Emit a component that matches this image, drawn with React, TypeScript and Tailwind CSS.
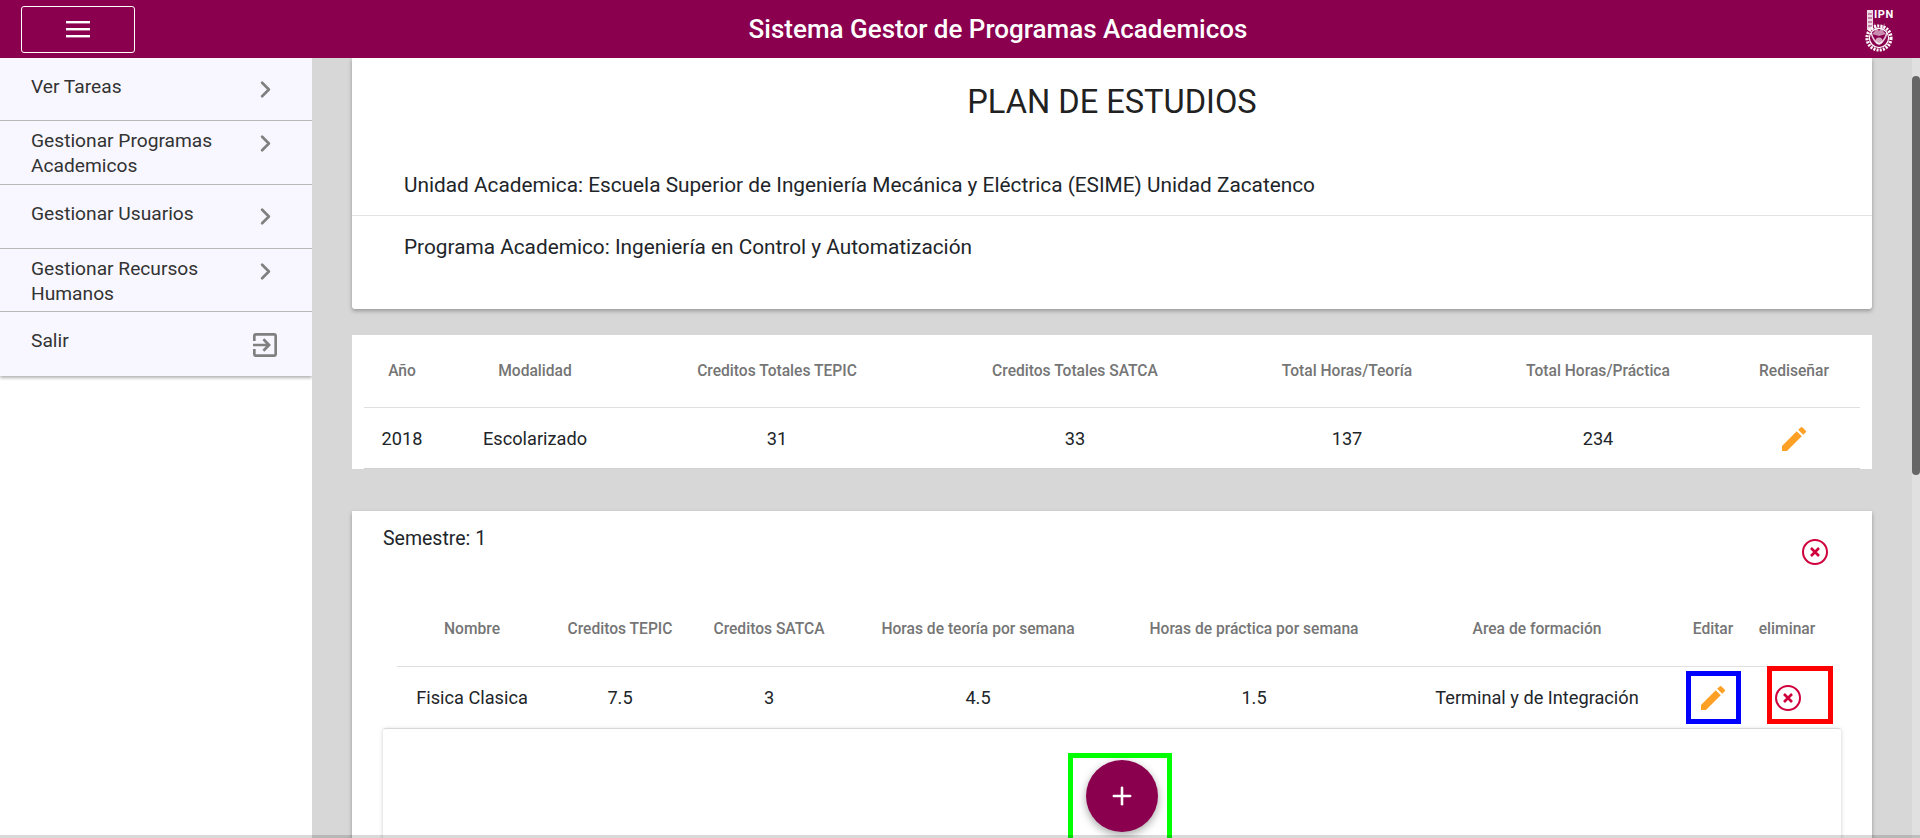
import React from 'react';
import { ChevronRight, Plus } from 'lucide-react';

const sideItems = [
  { label: 'Ver Tareas', h: 'h-[63px]' },
  { label: 'Gestionar Programas Academicos', h: 'h-[64px]' },
  { label: 'Gestionar Usuarios', h: 'h-[64px]' },
  { label: 'Gestionar Recursos Humanos', h: 'h-[63px]' },
];

const PlanCols = 'grid grid-cols-[76px_190px_294px_302px_242px_260px_130px]';
const SemCols = 'grid grid-cols-[150px_146px_152px_266px_286px_280px_72px_88px]';

function Pencil() {
  return (
    <svg width="32" height="32" viewBox="0 0 24 24" fill="#ffa026">
      <path d="M3 17.25V21h3.75L17.81 9.94l-3.75-3.75L3 17.25zM20.71 7.04a1 1 0 0 0 0-1.41l-2.34-2.34a1 1 0 0 0-1.41 0l-1.83 1.83 3.75 3.75 1.83-1.83z" />
    </svg>
  );
}

function CloseCircle() {
  return (
    <svg width="30" height="30" viewBox="0 0 30 30" fill="none" stroke="#d0003c">
      <circle cx="15" cy="15" r="12" strokeWidth="2" />
      <path d="M11 11l8 8M19 11l-8 8" strokeWidth="2.6" />
    </svg>
  );
}

function ExitIcon() {
  return (
    <svg width="32" height="32" viewBox="0 0 24 24" fill="#808080">
      <path d="M10.09 15.59L11.5 17l5-5-5-5-1.41 1.41L12.67 11H3v2h9.67l-2.58 2.59zM19 3H5c-1.11 0-2 .9-2 2v4h2V5h14v14H5v-4H3v4c0 1.1.89 2 2 2h14c1.1 0 2-.9 2-2V5c0-1.1-.9-2-2-2z" />
    </svg>
  );
}

function Logo() {
  return (
    <svg width="28" height="46" viewBox="0 0 28 46" fill="#fff" className="mt-[2px]">
      <path d="M2 3h6v20H2z" opacity="0.85" />
      <path d="M3 7h4M3 11h4M3 15h4M3 19h4" stroke="#8a004f" strokeWidth="0.8" />
      <text x="9" y="11" fontSize="11" fontFamily="Roboto, sans-serif" fontWeight="700" letterSpacing="0.6">IPN</text>
      <circle cx="14" cy="31" r="12" fill="none" stroke="#fff" strokeWidth="3.2" strokeDasharray="2 1.2" />
      <circle cx="14" cy="31" r="9.6" fill="none" stroke="#fff" strokeWidth="1.2" />
      <path d="M9 16l5 8 6-8-2 8 3 3-7 2-7-2 3-3z" opacity="0.55" />
      <path d="M6 26c2 6 5 10 8 11 3-1 6-5 8-11" fill="none" stroke="#fff" strokeWidth="1.6" opacity="0.8" />
      <circle cx="14" cy="34" r="3.6" opacity="0.65" />
    </svg>
  );
}

export default function App() {
  return (
    <div className="relative h-[838px] w-[1920px] overflow-hidden flex flex-col bg-white font-['Roboto',sans-serif] text-[#212529]">
      <header className="h-[58px] shrink-0 bg-[#8a004f] flex items-center justify-between pl-[21px] pr-[27px] text-white">
        <button className="w-[114px] h-[47px] border border-white rounded-[3px] flex items-center justify-center">
          <svg width="24" height="18" viewBox="0 0 24 18" fill="#fff">
            <rect x="0" y="1" width="24" height="2.4" />
            <rect x="0" y="8" width="24" height="2.4" />
            <rect x="0" y="15" width="24" height="2.4" />
          </svg>
        </button>
        <h1 className="mr-[4px] text-[26px] font-medium">Sistema Gestor de Programas Academicos</h1>
        <Logo />
      </header>

      <div className="flex flex-1 min-h-0">
        <aside className="w-[312px] shrink-0 bg-white">
          <nav className="bg-[#f8f7ff] shadow-[0_2px_3px_rgba(0,0,0,0.3)] text-[19.2px] leading-[25px] text-[#333]">
            {sideItems.map((item) => (
              <div key={item.label} className={`${item.h} border-b border-[#b9b9b9] flex items-start justify-between pl-[31px] pr-[33px]`}>
                <span className={item.label.length > 20 ? 'w-[210px] pt-[7px]' : 'pt-[16px]'}>{item.label}</span>
                <ChevronRight size={27} strokeWidth={2.4} className={item.label.length > 20 ? 'text-[#808080] mt-[9px]' : 'text-[#808080] mt-[18px]'} />
              </div>
            ))}
            <div className="h-[64px] flex items-start justify-between pl-[31px] pr-[31px]">
              <span className="pt-[16px]">Salir</span>
              <span className="mt-[17px]"><ExitIcon /></span>
            </div>
          </nav>
        </aside>

        <main className="flex-1 bg-[#d7d7d7] px-[40px] overflow-hidden">
          <section className="h-[251px] bg-white rounded-b-[3px] shadow-[0_2px_4px_rgba(0,0,0,0.3)]">
            <h2 className="pt-[24px] text-center text-[32.6px] leading-[40px] font-normal text-[#212121]">PLAN DE ESTUDIOS</h2>
            <p className="mt-[34px] h-[60px] pl-[52px] pt-[14px] border-b border-[#e3e3e3] text-[20.8px] leading-[30px]">Unidad Academica: Escuela Superior de Ingeniería Mecánica y Eléctrica (ESIME) Unidad Zacatenco</p>
            <p className="pl-[52px] pt-[16px] text-[20.8px] leading-[30px]">Programa Academico: Ingeniería en Control y Automatización</p>
          </section>

          <section className="mt-[26px] h-[134px] bg-white px-[12px]">
            <div className={`${PlanCols} h-[73px] pt-[2px] items-center border-b border-[#e0e0e0] text-center text-[15.6px] font-medium text-[#757575]`}>
              <span>Año</span><span>Modalidad</span><span>Creditos Totales TEPIC</span><span>Creditos Totales SATCA</span><span>Total Horas/Teoría</span><span>Total Horas/Práctica</span><span className="pl-[2px]">Rediseñar</span>
            </div>
            <div className={`${PlanCols} h-[61px] pt-[2px] items-center border-b border-[#d0d0d0] text-center text-[18.2px]`}>
              <span>2018</span><span>Escolarizado</span><span>31</span><span>33</span><span>137</span><span>234</span>
              <span className="flex justify-center pl-[2px]"><Pencil /></span>
            </div>
          </section>

          <section className="relative mt-[42px] h-[400px] bg-white px-[45px] shadow-[0_2px_4px_rgba(0,0,0,0.3)]">
            <p className="absolute left-[31px] top-[14px] text-[19.5px] leading-[27px]">Semestre: 1</p>
            <span className="absolute left-[1448px] top-[26px]"><CloseCircle /></span>
            <div className={`${SemCols} h-[156px] pt-[83px] items-center border-b border-[#e0e0e0] text-center text-[15.6px] font-medium text-[#757575]`}>
              <span>Nombre</span><span>Creditos TEPIC</span><span>Creditos SATCA</span><span>Horas de teoría por semana</span><span>Horas de práctica por semana</span><span>Area de formación</span><span>Editar</span><span className="pr-[12px] whitespace-nowrap">eliminar</span>
            </div>
            <div className={`${SemCols} h-[61px] items-center text-center text-[18.2px]`}>
              <span>Fisica Clasica</span><span>7.5</span><span>3</span><span>4.5</span><span>1.5</span><span className="whitespace-nowrap">Terminal y de Integración</span>
              <span className="flex justify-center">
                <button className="shrink-0 w-[55px] h-[53px] border-[5px] border-[#0000ff] flex items-center justify-center"><Pencil /></button>
              </span>
              <span className="flex justify-end pr-[4px]">
                <button className="-mt-[6px] w-[66px] h-[58px] border-[5px] border-[#ff0000] flex items-center pl-[1px] pt-[6px]"><CloseCircle /></button>
              </span>
            </div>
            <div className="-mx-[14px] w-[1458px] h-[200px] rounded-[3px] border-t border-[#d8d8d8] shadow-[0_1px_4px_rgba(0,0,0,0.2)] flex justify-center">
              <div className="mt-[24px] ml-[16px] w-[104px] h-[100px] border-[5px] border-[#00ff00] flex justify-center shrink-0">
                <button className="mt-[2px] ml-[4px] w-[72px] h-[72px] rounded-full bg-[#8a004f] text-white flex items-center justify-center shadow-[0_3px_8px_rgba(0,0,0,0.35)]">
                  <Plus size={28} strokeWidth={2.2} />
                </button>
              </div>
            </div>
          </section>
        </main>

        <div className="w-[8px] shrink-0 bg-[#e0e0e0]">
          <div className="mt-[18px] h-[399px] rounded-b-[4px] rounded-t-[4px] bg-[#666666]" />
        </div>
      </div>
      <div className="absolute bottom-0 left-0 w-full h-[3px] bg-black/15" />
    </div>
  );
}
